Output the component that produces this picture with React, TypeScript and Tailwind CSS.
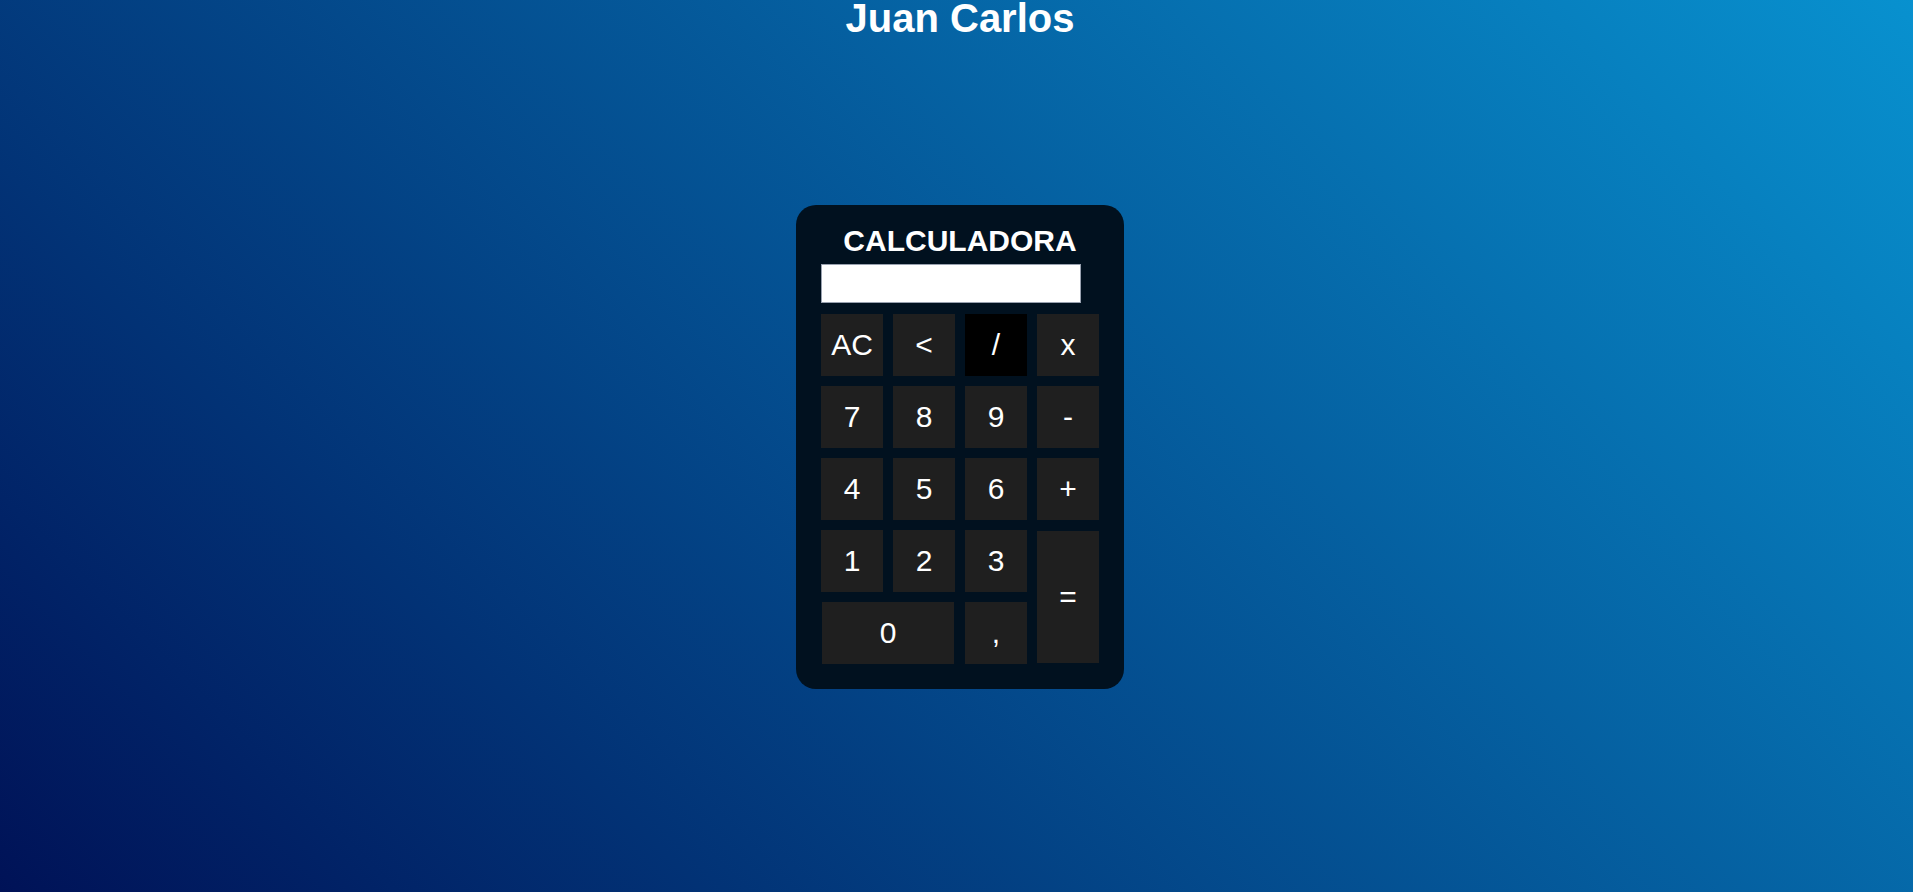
import { useState } from 'react'

const keys: { label: string; className?: string }[] = [
  { label: 'AC' },
  { label: '<' },
  { label: '/', className: 'bg-black' },
  { label: 'x' },
  { label: '7' },
  { label: '8' },
  { label: '9' },
  { label: '-' },
  { label: '4' },
  { label: '5' },
  { label: '6' },
  { label: '+' },
  { label: '1' },
  { label: '2' },
  { label: '3' },
  { label: '=', className: 'row-span-2 my-px bg-[#1f1f1f]' },
  { label: '0', className: 'col-span-2 mx-px bg-[#1f1f1f]' },
  { label: ',' },
]

export default function App() {
  const [display, setDisplay] = useState('')

  function press(k: string) {
    if (k === 'AC') return setDisplay('')
    if (k === '<') return setDisplay((d) => d.slice(0, -1))
    if (k === '=') {
      try {
        const expr = display.replace(/x/g, '*').replace(/,/g, '.')
        // eslint-disable-next-line no-new-func
        setDisplay(String(Function(`return (${expr})`)()).replace('.', ','))
      } catch {
        setDisplay('Error')
      }
      return
    }
    setDisplay((d) => d + k)
  }

  return (
    <div className="min-h-screen flex flex-col items-center pl-[7px] bg-[linear-gradient(45deg,#001257,#0891cf)] font-['Liberation_Sans',Arial,sans-serif] text-white">
      <h1 className="text-[40px] leading-9 font-bold">Juan Carlos</h1>

      <div className="mt-[169px] w-[328px] rounded-[20px] bg-[#01111f] px-[25px] pt-[18px] pb-[25px]">
        <h2 className="h-[35px] text-center text-[30px] leading-[35px] font-bold">CALCULADORA</h2>
        <input
          type="text"
          readOnly
          value={display}
          className="mt-[6px] block h-[39px] w-[260px] border border-gray-400 bg-white px-2 text-2xl text-black outline-none"
        />
        <div className="mt-[11px] grid grid-cols-[repeat(4,62px)] auto-rows-[62px] gap-[10px]">
          {keys.map((k) => (
            <button
              key={k.label}
              onClick={() => press(k.label)}
              className={`flex items-center justify-center pb-[2px] text-[30px] text-white ${k.className ?? 'bg-[#1f1f1f]'}`}
            >
              {k.label}
            </button>
          ))}
        </div>
      </div>
    </div>
  )
}
